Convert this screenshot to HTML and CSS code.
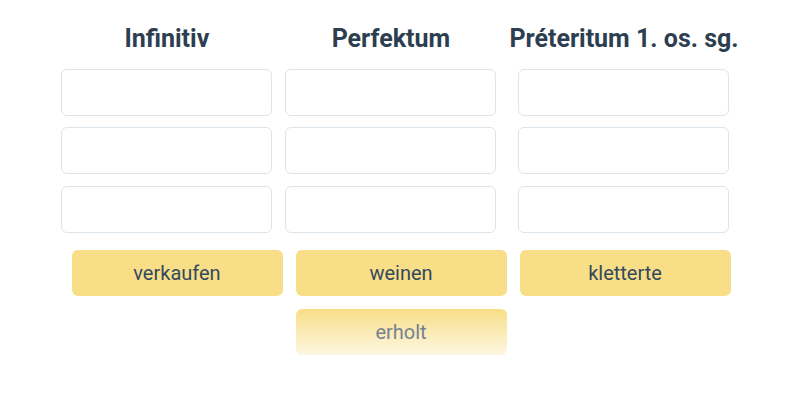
FILE: index.html
```html
<!DOCTYPE html>
<html>
<head>
<meta charset="utf-8">
<link rel="stylesheet" href="styles.css">
</head>
<body>
<div class="page">
  <div class="table">
    <div class="head">Infinitiv</div>
    <div class="head">Perfektum</div>
    <div class="head">Préteritum 1. os. sg.</div>
    <div class="cell"><div class="slot"></div></div>
    <div class="cell"><div class="slot"></div></div>
    <div class="cell"><div class="slot"></div></div>
    <div class="cell"><div class="slot"></div></div>
    <div class="cell"><div class="slot"></div></div>
    <div class="cell"><div class="slot"></div></div>
    <div class="cell"><div class="slot"></div></div>
    <div class="cell"><div class="slot"></div></div>
    <div class="cell"><div class="slot"></div></div>
  </div>
  <div class="chips">
    <div class="chip">verkaufen</div>
    <div class="chip">weinen</div>
    <div class="chip">kletterte</div>
    <div class="chip faded">erholt</div>
  </div>
</div>
</body>
</html>
```
FILE: styles.css
```css
html, body {
  margin: 0;
  padding: 0;
  background: #ffffff;
}
body {
  font-family: Roboto, "Liberation Sans", sans-serif;
  color: #2c3e50;
}
.page {
  width: 800px;
  padding-top: 22px;
  display: flex;
  flex-direction: column;
  align-items: center;
}
.table {
  display: grid;
  grid-template-columns: auto auto auto;
  row-gap: 11.5px;
}
.head {
  font-size: 25px;
  font-weight: 700;
  text-align: center;
  padding: 0 6.5px;
  line-height: 34px;
  margin-bottom: 1px;
  white-space: nowrap;
}
.cell {
  display: flex;
  justify-content: center;
  padding: 0 6.5px;
}
.slot {
  width: 209px;
  height: 45px;
  border: 1px solid #dce5eb;
  border-radius: 6px;
  background: #fff;
}
.chips {
  margin-top: 17px;
  width: 672px;
  margin-left: 2px;
  display: flex;
  flex-wrap: wrap;
  justify-content: center;
  row-gap: 13px;
}
.chip {
  width: 211px;
  height: 46px;
  margin: 0 6.5px;
  box-sizing: border-box;
  border-radius: 6px;
  background: #f8df87;
  display: flex;
  align-items: center;
  justify-content: center;
  font-size: 20px;
  color: #34495e;
}
.chip.faded {
  background: linear-gradient(#f8de86, #fdf7e2);
  color: #748290;
}
```
